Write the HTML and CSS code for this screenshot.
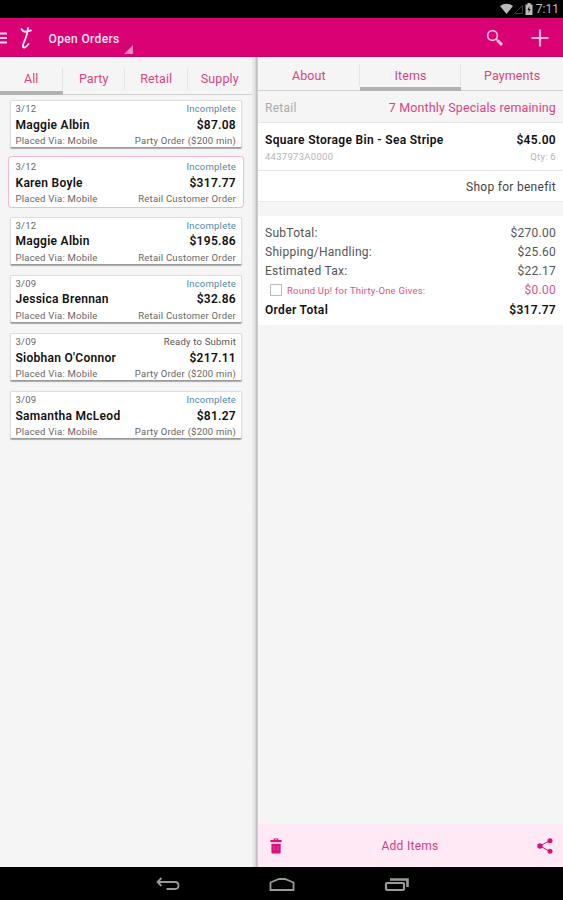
FILE: index.html
```html
<!DOCTYPE html>
<html lang="en">
<head>
<meta charset="utf-8">
<title>Open Orders</title>
<link rel="stylesheet" href="styles.css">
</head>
<body>
<div class="status">
  <svg class="status-icons" width="36" height="14" viewBox="0 0 36 14">
    <path d="M0 4Q6.500 -.5 13 4L6.500 12Z" fill="#bbb"/>
    <path d="M14.500 11.500H22.500V3.500Z" fill="none" stroke="#3a3a3a"/>
    <path d="M25.500 2.500H27.500V1H30.500V2.500H32.500V13H25.500Z" fill="#bbb"/>
    <path d="M29.500 4L27.500 8H28.800L28.500 11L30.700 7H29.300Z" fill="#111"/>
  </svg>
  <span class="clock">7:11</span>
</div>
<header class="bar">
  <svg class="menu" width="8" height="14" viewBox="0 0 8 14"><path d="M0 2.500H7M0 7H7M0 11.500H7" stroke="#ffd3ea" stroke-width="2"/></svg>
  <svg class="logo" width="14" height="24" viewBox="0 0 14 24"><path d="M1.500 3Q3.500 6.500 7 5.500T11 4.500M8 2Q7.500 8 5 14C2 19.500 2.500 22 4.500 21.500C6.500 21 7.500 19.500 8.500 18" fill="none" stroke="#ffe4f2" stroke-width="1.900" stroke-linecap="round"/></svg>
  <span class="title">Open Orders</span>
  <svg class="caret" width="9" height="9" viewBox="0 0 9 9"><path d="M9 0V9H0Z" fill="#ec86bd"/></svg>
  <svg class="search" width="18" height="18" viewBox="0 0 18 18" fill="none" stroke="#ffc0e0"><circle cx="6.500" cy="6.500" r="4.900" stroke-width="1.700"/><path d="M10 10L11.500 11.500" stroke-width="1.700"/><path d="M11.500 11.500L16 16" stroke-width="3"/></svg>
  <svg class="plus" width="18" height="18" viewBox="0 0 18 18"><path d="M9 .5V17.500M.5 9H17.500" stroke="#ffb5db" stroke-width="2.200"/></svg>
</header>
<main class="panes">
  <section class="orders">
    <nav class="tabs orders-tabs"><span class="tab active">All</span><span class="tab">Party</span><span class="tab">Retail</span><span class="tab">Supply</span></nav>
    <div class="cards">
      <article class="card"><div class="row small"><span class="date">3/12</span><span class="state">Incomplete</span></div><div class="row name"><span>Maggie Albin</span><span class="price">$87.08</span></div><div class="row small"><span>Placed Via: Mobile</span><span>Party Order ($200 min)</span></div></article>
      <article class="card selected"><div class="row small"><span class="date">3/12</span><span class="state">Incomplete</span></div><div class="row name"><span>Karen Boyle</span><span class="price">$317.77</span></div><div class="row small"><span>Placed Via: Mobile</span><span>Retail Customer Order</span></div></article>
      <article class="card"><div class="row small"><span class="date">3/12</span><span class="state">Incomplete</span></div><div class="row name"><span>Maggie Albin</span><span class="price">$195.86</span></div><div class="row small"><span>Placed Via: Mobile</span><span>Retail Customer Order</span></div></article>
      <article class="card"><div class="row small"><span class="date">3/09</span><span class="state">Incomplete</span></div><div class="row name"><span>Jessica Brennan</span><span class="price">$32.86</span></div><div class="row small"><span>Placed Via: Mobile</span><span>Retail Customer Order</span></div></article>
      <article class="card"><div class="row small"><span class="date">3/09</span><span class="state ready">Ready to Submit</span></div><div class="row name"><span>Siobhan O'Connor</span><span class="price">$217.11</span></div><div class="row small"><span>Placed Via: Mobile</span><span>Party Order ($200 min)</span></div></article>
      <article class="card"><div class="row small"><span class="date">3/09</span><span class="state">Incomplete</span></div><div class="row name"><span>Samantha McLeod</span><span class="price">$81.27</span></div><div class="row small"><span>Placed Via: Mobile</span><span>Party Order ($200 min)</span></div></article>
    </div>
  </section>
  <div class="divider"></div>
  <section class="detail">
    <nav class="tabs detail-tabs"><span class="tab">About</span><span class="tab active">Items</span><span class="tab">Payments</span></nav>
    <div class="row kind"><span>Retail</span><span class="specials">7 Monthly Specials remaining</span></div>
    <div class="item">
      <div class="row item-name"><span>Square Storage Bin - Sea Stripe</span><span class="item-price">$45.00</span></div>
      <div class="row item-meta"><span>4437973A0000</span><span class="qty">Qty: 6</span></div>
    </div>
    <div class="benefit"><span>Shop for benefit</span></div>
    <div class="totals">
      <div class="row"><span>SubTotal:</span><span class="amount">$270.00</span></div>
      <div class="row"><span>Shipping/Handling:</span><span class="amount">$25.60</span></div>
      <div class="row"><span>Estimated Tax:</span><span class="amount">$22.17</span></div>
      <div class="row gives"><span class="check"></span><span class="gives-label">Round Up! for Thirty-One Gives:</span><span class="amount">$0.00</span></div>
      <div class="row total"><span>Order Total</span><span class="total-amount">$317.77</span></div>
    </div>
    <footer class="actions">
      <svg width="13" height="18" viewBox="0 0 14 18" fill="#d8127d"><path d="M4 2.500V1H9V2.500H12.500V5H.5V2.500ZM5.300 2.500H7.700V2H5.300ZM1.500 6.500H11.500V16Q11.500 17 10.500 17H2.500Q1.500 17 1.500 16Z"/><path d="M4.500 9V14M8.500 9V14" stroke="#e75aa5" stroke-width=".8"/></svg>
      <span class="add">Add Items</span>
      <svg width="16" height="16" viewBox="0 0 16 16" fill="#d8127d"><path d="M13 2.500L3 8L13 13.500" fill="none" stroke="#d8127d"/><circle cx="13" cy="2.800" r="2.500"/><circle cx="3" cy="8" r="2.700"/><circle cx="13" cy="13.200" r="2.500"/></svg>
    </footer>
  </section>
</main>
<div class="navbar">
  <svg width="24" height="14" viewBox="0 0 24 14" fill="none" stroke="#999" stroke-width="1.800"><path d="M5.500 1L1.500 5L5.500 9M1.500 5H19Q22.500 5 22.500 8.500T19 12H10.500"/></svg>
  <svg width="26" height="15" viewBox="0 0 26 15" fill="none" stroke="#999" stroke-width="1.800"><path d="M1.500 13V5.500L10 2H16L24.500 5.500V13Z"/></svg>
  <svg width="26" height="15" viewBox="0 0 26 15" fill="none" stroke="#999"><rect x="2" y="6" width="18" height="7" rx="1" stroke-width="2.200"/><path d="M6 2.500H23.500V10" stroke-width="2.600"/></svg>
</div>
</body>
</html>
```
FILE: styles.css
```css
* { box-sizing: border-box; }
body {
  margin: 0;
  width: 563px;
  height: 900px;
  display: flex;
  flex-direction: column;
  overflow: hidden;
  font-family: Roboto, sans-serif;
  font-size: 12px;
  letter-spacing: .28px;
  color: #555;
  background: #f5f5f5;
}
span { white-space: nowrap; }
svg { display: block; flex: none; }
.status {
  height: 18px;
  background: #000;
  display: flex;
  justify-content: flex-end;
  align-items: center;
  padding-right: 4px;
}
.clock { color: #bbb; font-size: 12px; line-height: 18px; letter-spacing: 0; }
.bar {
  height: 39px;
  background: #d90073;
  border-bottom: 1px solid #c4006a;
  display: flex;
  align-items: center;
}
.menu { margin-top: 2px; }
.logo { margin: 2px 0 0 12px; }
.title { margin: 3px 0 0 14.500px; color: #ffe3f2; font-size: 12px; font-weight: 500; letter-spacing: .36px; }
.caret { margin: 25px 0 0 4.500px; }
.search { margin: 2px 0 0 auto; }
.plus { margin: 2px 14px 0 27px; }
.panes { flex: 1; display: flex; min-height: 0; }
.orders { width: 252px; }
.divider {
  width: 6px;
  background: linear-gradient(90deg, #eee, #e2e2e2 50%, #b9b9b9 80%, #ddd);
}
.detail { flex: 1; display: flex; flex-direction: column; min-width: 0; }
.tabs { display: flex; color: #d8457f; font-size: 12.500px; letter-spacing: .1px; }
.tab {
  flex: 1;
  display: flex;
  justify-content: center;
  border-bottom: 1px solid #d0d0d0;
  background: linear-gradient(#e4e4e4, #e4e4e4) right 11px / 1px 22px no-repeat;
}
.tab:last-child { background: none; }
.tab.active { border-bottom: 4px solid #b2b2b0; }
.orders-tabs { height: 38px; line-height: 43px; }
.orders-tabs .tab { flex: 0 0 62.500px; }
.orders-tabs .tab:last-child { flex: 1; }
.detail-tabs { height: 34px; line-height: 37px; }
.detail-tabs .tab { background-position: right 7px; }
.cards { display: flex; flex-direction: column; gap: 10.300px; padding: 5px 10px 0 10px; }
.card {
  height: 48px;
  padding: 0 5px 0 4.500px;
  background: #fff;
  border: 1px solid #ddd;
  border-bottom-color: #999;
  border-radius: 2px;
  box-shadow: 0 1px 1px #aaa;
}
.card.selected { border-color: #fff; box-shadow: 0 0 0 1px #fff, 0 0 0 2px #f4b9cd; }
.row { display: flex; justify-content: space-between; align-items: center; }
.small { height: 15px; font-size: 9.500px; letter-spacing: .22px; color: #666; }
.state { color: #4e88ad; }
.state.ready { color: #555; }
.name { height: 17px; font-size: 12px; font-weight: 600; color: #111; }
.kind { height: 32px; padding: 2px 7px 0 7px; color: #aaa; border-bottom: 1px solid #e6e6e6; }
.specials { color: #d8457f; font-size: 12.500px; letter-spacing: .13px; }
.item { height: 48px; padding: 8px 7px 0 7px; background: #fff; border-bottom: 1px solid #e4e4e4; }
.item-name { height: 18px; font-weight: 600; letter-spacing: .32px; color: #111; }
.item-meta { height: 14px; font-size: 9.500px; color: #b5b5b5; }
.benefit { height: 31px; padding: 2px 7px 0 0; display: flex; align-items: center; justify-content: flex-end; background: #fff; border-bottom: 1px solid #e8e8e8; color: #444; }
.totals { margin-top: 14px; height: 109px; padding: 8px 7px 0; background: #fff; }
.totals .row { height: 18.700px; }
.totals .gives { height: 20.500px; color: #dc5288; }
.check { width: 12px; height: 12px; border: 1px solid #bbb; margin: 0 5px 0 5px; }
.gives-label { font-size: 9.500px; letter-spacing: .22px; margin-right: auto; }
.totals .total { font-weight: 600; color: #111; letter-spacing: .32px; }
.actions { margin-top: auto; height: 43px; padding: 0 10px 0 12px; background: #fee9f4; display: flex; align-items: center; justify-content: space-between; color: #cf3f86; }
.navbar { height: 33px; background: #000; display: flex; align-items: center; justify-content: center; gap: 89px; padding: 1px 0 0 2px; }
```
